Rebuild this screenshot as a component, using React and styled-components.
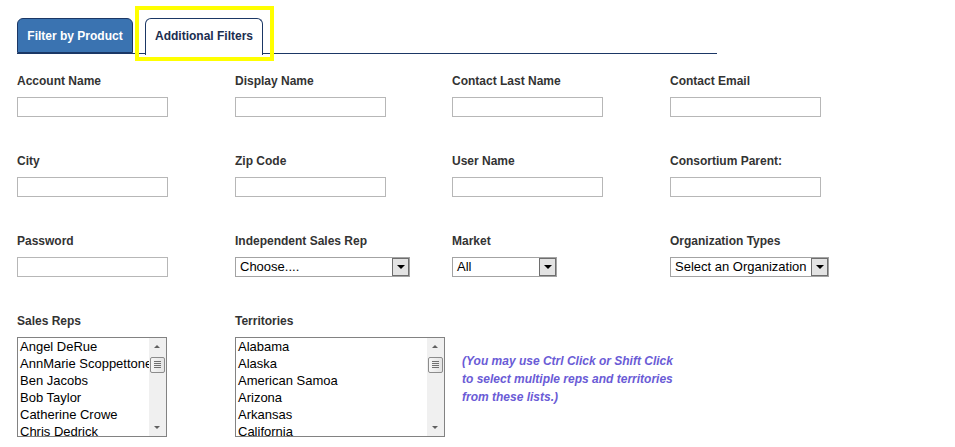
import React from 'react';
import styled, { createGlobalStyle } from 'styled-components';

const GlobalStyle = createGlobalStyle`
  html, body {
    margin: 0;
    padding: 0;
    background: #ffffff;
    font-family: 'Liberation Sans', Arial, sans-serif;
  }
`;

const Page = styled.div`
  width: 955px;
  height: 447px;
  padding: 18px 0 0 17px;
  box-sizing: border-box;
  overflow: hidden;
`;

const TabBar = styled.div`
  position: relative;
  display: flex;
  align-items: flex-end;
  gap: 12px;
  width: 700px;
  height: 35px;
  border-bottom: 1.5px solid #1b3765;
`;

const Tab = styled.div`
  display: flex;
  align-items: center;
  justify-content: center;
  box-sizing: border-box;
  height: ${(p) => (p.active ? '37px' : '35px')};
  margin-bottom: ${(p) => (p.active ? '-2px' : '0')};
  width: ${(p) => p.width}px;
  border: 1px solid #1b3765;
  border-bottom: ${(p) => (p.active ? 'none' : '1px solid #1b3765')};
  border-radius: 6px 6px 0 0;
  background: ${(p) => (p.active ? '#ffffff' : '#3a73b1')};
  color: ${(p) => (p.active ? '#1b2d4f' : '#ffffff')};
  font-size: 12px;
  font-weight: bold;
  padding-bottom: ${(p) => (p.active ? '2px' : '0')};
`;

const Highlight = styled.div`
  position: absolute;
  left: 118px;
  top: -12px;
  width: 139px;
  height: 55px;
  box-sizing: border-box;
  border: 4px solid #ffff00;
  pointer-events: none;
`;

const Grid = styled.div`
  display: grid;
  grid-template-columns: 218px 217px 218px 217px;
  row-gap: 35px;
  margin-top: 17.5px;
`;

const Field = styled.div`
  display: flex;
  flex-direction: column;
`;

const Label = styled.div`
  font-size: 12px;
  font-weight: bold;
  color: #333333;
  line-height: 16px;
  height: 16px;
  padding-top: 1px;
  margin-bottom: 8px;
`;

const TextInput = styled.div`
  box-sizing: border-box;
  width: 151px;
  height: 20px;
  border: 1px solid #b7b7b7;
  background: #fff;
`;

const SelectBox = styled.div`
  display: flex;
  box-sizing: border-box;
  width: ${(p) => p.width}px;
  height: 20px;
  border: 1px solid #a3a3a3;
  background: #fff;
`;

const SelectText = styled.div`
  flex: 1;
  font-size: 13px;
  line-height: 18px;
  color: #000;
  padding-left: 4px;
  white-space: nowrap;
  overflow: hidden;
`;

const SelectButton = styled.div`
  display: flex;
  align-items: center;
  justify-content: center;
  box-sizing: border-box;
  width: 17px;
  height: 18px;
  border: 1px solid #6e6e6e;
  background: #e3e3e3;

  &::after {
    content: '';
    border-left: 4px solid transparent;
    border-right: 4px solid transparent;
    border-top: 4px solid #000;
    margin-top: 1px;
  }
`;

const ListBox = styled.div`
  display: flex;
  box-sizing: border-box;
  width: ${(p) => p.width}px;
  height: 100px;
  border: 1px solid #828282;
  background: #fff;
`;

const ListItems = styled.div`
  flex: 1;
  overflow: hidden;
`;

const ListItem = styled.div`
  font-size: 13px;
  line-height: 17px;
  height: 17px;
  padding-left: 2px;
  color: #000;
  white-space: nowrap;
`;

const Scrollbar = styled.div`
  position: relative;
  width: 17px;
  background: #f0f0f0;
  flex-shrink: 0;
`;

const Arrow = styled.div`
  position: absolute;
  left: 5px;
  ${(p) => (p.down ? 'bottom: 7px;' : 'top: 7px;')}
  border-left: 3.5px solid transparent;
  border-right: 3.5px solid transparent;
  ${(p) => (p.down ? 'border-top: 3px solid #606060;' : 'border-bottom: 3px solid #606060;')}
`;

const Thumb = styled.div`
  position: absolute;
  left: 1px;
  top: 19px;
  width: 15px;
  height: 16px;
  box-sizing: border-box;
  border: 1px solid #8c8c8c;
  border-radius: 2px;
  background: linear-gradient(to right, #f6f6f6, #e4e4e4);
  display: flex;
  flex-direction: column;
  align-items: center;
  justify-content: center;
  gap: 1px;
`;

const Grip = styled.div`
  width: 7px;
  height: 1px;
  background: #707070;
`;

const HelpText = styled.div`
  margin-top: 40px;
  padding-left: 10px;
  font-size: 12px;
  line-height: 18px;
  font-weight: bold;
  font-style: italic;
  color: #6a5bd6;
  white-space: nowrap;
`;

const Select = ({ width, value }) => (
  <SelectBox width={width}>
    <SelectText>{value}</SelectText>
    <SelectButton />
  </SelectBox>
);

const List = ({ width, items }) => (
  <ListBox width={width}>
    <ListItems>
      {items.map((item) => (
        <ListItem key={item}>{item}</ListItem>
      ))}
    </ListItems>
    <Scrollbar>
      <Arrow />
      <Thumb>
        <Grip />
        <Grip />
        <Grip />
        <Grip />
      </Thumb>
      <Arrow down />
    </Scrollbar>
  </ListBox>
);

const textFields = [
  'Account Name',
  'Display Name',
  'Contact Last Name',
  'Contact Email',
  'City',
  'Zip Code',
  'User Name',
  'Consortium Parent:',
  'Password',
];

const salesReps = [
  'Angel DeRue',
  'AnnMarie Scoppettone',
  'Ben Jacobs',
  'Bob Taylor',
  'Catherine Crowe',
  'Chris Dedrick',
];

const territories = [
  'Alabama',
  'Alaska',
  'American Samoa',
  'Arizona',
  'Arkansas',
  'California',
];

export default function App() {
  return (
    <>
      <GlobalStyle />
      <Page>
        <TabBar>
          <Tab width={116}>Filter by Product</Tab>
          <Tab width={118} active>Additional Filters</Tab>
          <Highlight />
        </TabBar>
        <Grid>
          {textFields.map((name) => (
            <Field key={name}>
              <Label>{name}</Label>
              <TextInput />
            </Field>
          ))}
          <Field>
            <Label>Independent Sales Rep</Label>
            <Select width={175} value="Choose...." />
          </Field>
          <Field>
            <Label>Market</Label>
            <Select width={105} value="All" />
          </Field>
          <Field>
            <Label>Organization Types</Label>
            <Select width={159} value="Select an Organization" />
          </Field>
          <Field>
            <Label>Sales Reps</Label>
            <List width={150} items={salesReps} />
          </Field>
          <Field>
            <Label>Territories</Label>
            <List width={210} items={territories} />
          </Field>
          <HelpText>
            (You may use Ctrl Click or Shift Click
            <br />
            to select multiple reps and territories
            <br />
            from these lists.)
          </HelpText>
        </Grid>
      </Page>
    </>
  );
}
